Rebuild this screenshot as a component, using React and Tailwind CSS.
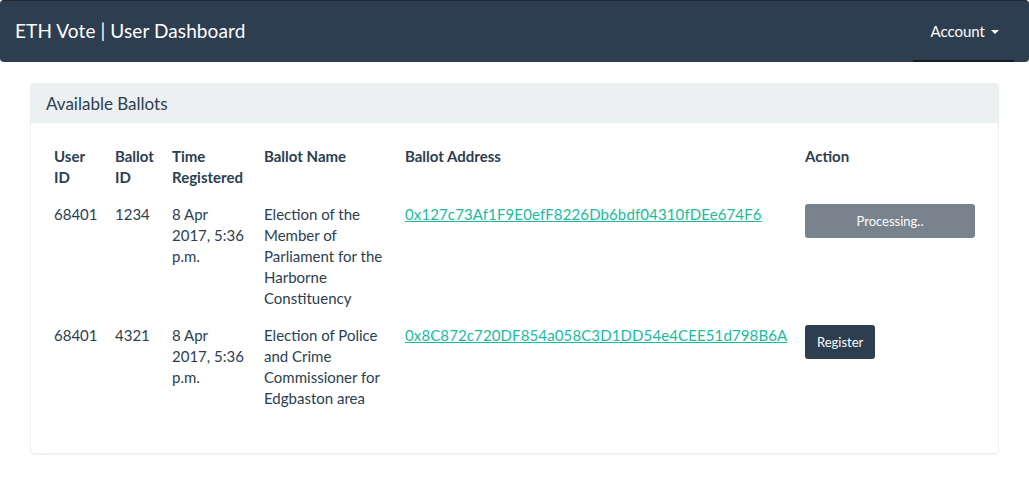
import React from 'react';

const ballots = [
  {
    userId: '68401',
    ballotId: '1234',
    time: '8 Apr 2017, 5:36 p.m.',
    name: 'Election of the Member of Parliament for the Harborne Constituency',
    address: '0x127c73Af1F9E0efF8226Db6bdf04310fDEe674F6',
    status: 'processing',
  },
  {
    userId: '68401',
    ballotId: '4321',
    time: '8 Apr 2017, 5:36 p.m.',
    name: 'Election of Police and Crime Commissioner for Edgbaston area',
    address: '0x8C872c720DF854a058C3D1DD54e4CEE51d798B6A',
    status: 'open',
  },
];

const App = () => {
  return (
    <div className="min-h-[486px] bg-white text-[15px] leading-[21px] text-[#2c3e50] font-['Lato','Liberation_Sans',sans-serif]">
      {/* Navbar */}
      <nav className="h-[62px] bg-[#2c3e50] rounded-[4px] border-t border-[#1f2933] flex items-center justify-between">
        <a className="pl-[15px] pb-[2px] text-[19px] leading-[21px] tracking-[0.1px] text-white">ETH Vote | User Dashboard</a>
        <div className="relative self-stretch flex items-center pl-[17px] pr-[15px] mr-[15px] text-white">
          <span>Account</span>
          <span className="ml-[6px] inline-block w-0 h-0 border-l-[4px] border-r-[4px] border-t-[4px] border-l-transparent border-r-transparent border-t-white"></span>
          <div className="absolute left-0 right-0 bottom-0 h-[2px] bg-[#141c24]"></div>
        </div>
      </nav>

      {/* Ballots Panel */}
      <div className="mx-[30px] mt-[21px] border border-[#ecf0f1] rounded-[4px] shadow-[0_1px_1px_rgba(0,0,0,0.05)]">
        <div className="bg-[#ecf0f1] px-[15px] py-[10px] rounded-t-[3px]">
          <h3 className="text-[17px] leading-[19px]">Available Ballots</h3>
        </div>
        <div className="p-[15px]">
          <table className="w-full mb-[21px] table-fixed border-collapse">
            <colgroup>
              <col className="w-[61px]" />
              <col className="w-[57px]" />
              <col className="w-[92px]" />
              <col className="w-[141px]" />
              <col className="w-[400px]" />
              <col className="w-[186px]" />
            </colgroup>
            <thead>
              <tr className="text-left font-bold align-bottom">
                <th className="p-[8px]">User ID</th>
                <th className="p-[8px]">Ballot ID</th>
                <th className="p-[8px]">Time Registered</th>
                <th className="p-[8px] align-top">Ballot Name</th>
                <th className="p-[8px] align-top">Ballot Address</th>
                <th className="p-[8px] align-top">Action</th>
              </tr>
            </thead>
            <tbody>
              {ballots.map(b => (
                <tr key={b.ballotId} className="align-top">
                  <td className="p-[8px]">{b.userId}</td>
                  <td className="p-[8px]">{b.ballotId}</td>
                  <td className="p-[8px]">{b.time}</td>
                  <td className="p-[8px]">{b.name}</td>
                  <td className="p-[8px]">
                    <a className="text-[#18bc9c] underline tracking-[0.12px]">{b.address}</a>
                  </td>
                  <td className="p-[8px]">
                    {b.status === 'processing' ? (
                      <button className="w-full h-[34px] rounded-[3px] bg-[#78838e] text-white text-[13px]">
                        Processing..
                      </button>
                    ) : (
                      <button className="h-[34px] px-[12px] rounded-[3px] bg-[#2c3e50] text-white text-[13px]">
                        Register
                      </button>
                    )}
                  </td>
                </tr>
              ))}
            </tbody>
          </table>
        </div>
      </div>
    </div>
  );
};

export default App;
